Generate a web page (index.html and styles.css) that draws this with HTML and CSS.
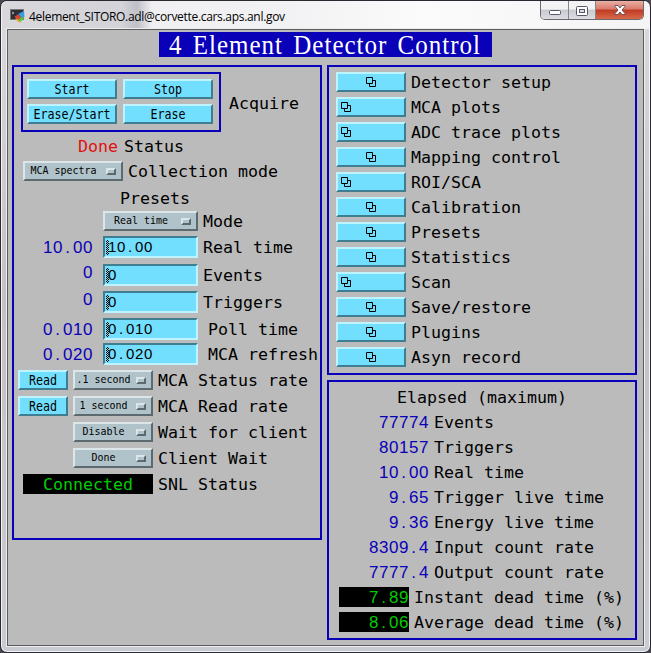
FILE: index.html
```
<!DOCTYPE html>
<html lang="en">
<head>
<meta charset="utf-8">
<title>4element_SITORO.adl</title>
<link rel="stylesheet" href="styles.css">
</head>
<body>
<div class="window">
  <header class="titlebar">
    <svg class="app-icon" width="16" height="16" viewBox="0 0 16 16">
      <rect x="0" y="1" width="14" height="11" fill="#77797c"/><rect x="1" y="2" width="12" height="9" fill="#2c3034"/><path d="M2 4l2 1-2 1" stroke="#ccc" fill="none" stroke-width=".8"/>
      <path d="M8 6l6-3 .5 6-3 1z" fill="#3d9be0"/><path d="M4.500 8.500l3.500-2 3.500 3.500-3.500 2z" fill="#e2442f"/><path d="M8 12l3.500-3 3 1-4 4z" fill="#5cc63c"/><path d="M5 9.500l3 2 2.500 3.500-3-1.500z" fill="#f0a030"/>
    </svg>
    <span class="caption">4element_SITORO.adl@corvette.cars.aps.anl.gov</span>
    <div class="controls">
      <div class="ctl min"><svg width="12" height="5"><rect x=".5" y=".5" width="11" height="4" rx="1" fill="#fff" stroke="#55586c"/></svg></div>
      <div class="ctl max"><svg width="12" height="10"><rect x=".5" y=".5" width="11" height="9" rx="1" fill="#fff" stroke="#55586c"/><rect x="3.5" y="3.5" width="5" height="3" fill="#ddd" stroke="#55586c"/></svg></div>
      <div class="ctl close"><svg width="12" height="10" viewBox="0 0 12 10"><path d="M1 .5h3l2 2.400 2-2.400h3v1L8 5l3 3.500v1H8L6 7.100 4 9.500H1v-1L4 5 1 1.500z" fill="#fff" stroke="#5c4650" stroke-width=".9"/></svg></div>
    </div>
  </header>
  <main class="client">
    <h1><span>4 Element Detector Control</span></h1>
    <div class="columns">
      <section class="panel control">
        <div class="row">
          <div class="acquire">
            <button class="btn"><span>Start</span></button><button class="btn"><span>Stop</span></button>
            <button class="btn"><span>Erase/Start</span></button><button class="btn"><span>Erase</span></button>
          </div>
          <span class="acquire-label">Acquire</span>
        </div>
        <div class="row status"><span class="red">Done</span><span>Status</span></div>
        <div class="row mode"><div class="menu"><span>MCA spectra</span><i></i></div><span>Collection mode</span></div>
        <div class="row presets">Presets</div>
        <div class="row preset-mode"><div class="menu"><span>Real time</span><i></i></div><span>Mode</span></div>
        <div class="row preset"><span class="num val">10<b>.</b>00</span><div class="field num">10<b>.</b>00</div><span>Real time</span></div>
        <div class="row preset"><span class="num val up">0</span><div class="field num">0</div><span>Events</span></div>
        <div class="row preset"><span class="num val up">0</span><div class="field num">0</div><span>Triggers</span></div>
        <div class="row preset wide"><span class="num val">0<b>.</b>010</span><div class="field num">0<b>.</b>010</div><span>Poll time</span></div>
        <div class="row preset wide"><span class="num val">0<b>.</b>020</span><div class="field num">0<b>.</b>020</div><span>MCA refresh</span></div>
        <div class="row rate"><button class="btn"><span>Read</span></button><div class="menu"><span>.1 second</span><i></i></div><span>MCA Status rate</span></div>
        <div class="row rate"><button class="btn"><span>Read</span></button><div class="menu"><span>1 second</span><i></i></div><span>MCA Read rate</span></div>
        <div class="row wait"><div class="menu"><span>Disable</span><i></i></div><span>Wait for client</span></div>
        <div class="row wait"><div class="menu"><span>Done</span><i></i></div><span>Client Wait</span></div>
        <div class="row snl"><span class="led">Connected</span><span>SNL Status</span></div>
      </section>
      <div class="right">
        <svg width="0" height="0" class="defs"><symbol id="rel" viewBox="0 0 10 10"><path d="M3.500 3.500h6v6h-6z" fill="none" stroke="#000"/><path d="M.5.5h6v6h-6z" fill="#73dfff" stroke="#000"/></symbol></svg>
        <section class="panel links">
          <div class="row"><button class="btn"><svg><use href="#rel"/></svg></button><span>Detector setup</span></div>
          <div class="row"><button class="btn left"><svg><use href="#rel"/></svg></button><span>MCA plots</span></div>
          <div class="row"><button class="btn left"><svg><use href="#rel"/></svg></button><span>ADC trace plots</span></div>
          <div class="row"><button class="btn"><svg><use href="#rel"/></svg></button><span>Mapping control</span></div>
          <div class="row"><button class="btn left"><svg><use href="#rel"/></svg></button><span>ROI/SCA</span></div>
          <div class="row"><button class="btn"><svg><use href="#rel"/></svg></button><span>Calibration</span></div>
          <div class="row"><button class="btn"><svg><use href="#rel"/></svg></button><span>Presets</span></div>
          <div class="row"><button class="btn"><svg><use href="#rel"/></svg></button><span>Statistics</span></div>
          <div class="row"><button class="btn left"><svg><use href="#rel"/></svg></button><span>Scan</span></div>
          <div class="row"><button class="btn"><svg><use href="#rel"/></svg></button><span>Save/restore</span></div>
          <div class="row"><button class="btn"><svg><use href="#rel"/></svg></button><span>Plugins</span></div>
          <div class="row"><button class="btn"><svg><use href="#rel"/></svg></button><span>Asyn record</span></div>
        </section>
        <section class="panel elapsed">
          <div class="row heading">Elapsed (maximum)</div>
          <div class="row"><span class="num val">77774</span><span>Events</span></div>
          <div class="row"><span class="num val">80157</span><span>Triggers</span></div>
          <div class="row"><span class="num val">10<b>.</b>00</span><span>Real time</span></div>
          <div class="row"><span class="num val">9<b>.</b>65</span><span>Trigger live time</span></div>
          <div class="row"><span class="num val">9<b>.</b>36</span><span>Energy live time</span></div>
          <div class="row"><span class="num val">8309<b>.</b>4</span><span>Input count rate</span></div>
          <div class="row"><span class="num val">7777<b>.</b>4</span><span>Output count rate</span></div>
          <div class="row"><span class="num led">7<b>.</b>89</span><span>Instant dead time (%)</span></div>
          <div class="row"><span class="num led">8<b>.</b>06</span><span>Average dead time (%)</span></div>
        </section>
      </div>
    </div>
  </main>
</div>
</body>
</html>
```
FILE: styles.css
```
* { box-sizing: border-box; }
body { margin: 0; background: #4a4650; overflow: hidden; }
.window {
  width: 651px; height: 653px; padding: 0 6px 6px;
  border: 1px solid #2a2830; border-radius: 7px;
  box-shadow: inset 0 0 0 1px #f4f4f6;
  background: linear-gradient(180deg, #eee 0, #d8d8da 30px, #c4c0c6 300px, #c8ccd2 100%);
}
.titlebar {
  height: 28px; margin: 0 -5px; padding: 1px 5px 0 8px;
  display: flex; align-items: flex-start;
  border-radius: 6px 6px 0 0;
  background: linear-gradient(90deg, #d9d9dc 0, #d3d3d8 120px, #bfc0c8 135px, #f0f0f2 150px, #f2f2f4 290px, #fbfbfb 420px, #f4f4f4 100%);
}
.app-icon { margin: 6px 4px 0 0; }
.caption { flex: 1; margin: 6px 0 0 -1px; font: 12px/18px "Open Sans", "Noto Sans", sans-serif; color: #000; white-space: nowrap; letter-spacing: -.310px; }
.controls { display: flex; height: 19px; margin-top: -1px; border: 1px solid #6a6a70; border-top: 0; border-radius: 0 0 5px 5px; overflow: hidden; }
.ctl { display: flex; align-items: center; justify-content: center; background: linear-gradient(#f3f3f4 0 45%, #c9cacf 50%, #dcdce2); border-right: 1px solid #85858c; }
.min { width: 28px; padding-top: 5px; }
.max { width: 27px; padding-top: 1px; }
.close { width: 47px; border: 0; background: linear-gradient(#eab0a4 0, #d9796a 45%, #c03a22 50%, #d8694a); }

.client {
  width: 637px; height: 617px; border: 1px solid #5c5c5c; background: #bbb;
  box-shadow: 0 0 0 1px #eee;
  font: 16.610px/20px "DejaVu Sans Mono", monospace; color: #000;
  padding-top: 2px;
}
h1 { margin: 0 0 0 151px; width: 333px; height: 25px; background: #0a00b8; color: #fff; font: 25px/25px "Liberation Serif", serif; letter-spacing: 1px; word-spacing: 3px; padding-left: 10px; white-space: pre; }
h1 span { display: inline-block; transform: scaleY(1.060); }
.columns { display: flex; gap: 5px; margin: 8px 0 0 4px; align-items: flex-start; }
.panel { width: 310px; border: 2px solid #0a00b8; padding-top: 5px; display: grid; }
.row { display: flex; height: 20px; line-height: 22px; white-space: pre; }
.control { height: 475px; align-content: start; grid-template-rows: 64px 25px 27px 23px 25px 28px 27px 27px 25px 27px 26px 26px 26px 26px 20px; }
.right { display: grid; gap: 5px; }
.defs { position: absolute; }

.btn, .menu, .field { border: 2px solid; height: 20px; padding: 0; display: flex; align-items: center; }
.btn { justify-content: center; color: #000; background: #73dfff; border-color: #bff3ff #3f7e90 #3f7e90 #bff3ff; font: 11.630px/16px "DejaVu Sans Mono", monospace; }
.btn span { transform: scaleY(1.150); }
.btn svg { width: 10px; height: 10px; display: block; }
.btn.left { justify-content: flex-start; padding-left: 3px; }
.menu { background: #b0c3ca; border-color: #dce6e9 #5c6a70 #5c6a70 #dce6e9; font: 9.970px/16px "DejaVu Sans Mono", monospace; padding-right: 5px; }
.menu span { flex: 1; margin-right: 4px; text-align: center; transform: scaleY(1.100); }
.menu i { width: 10px; height: 7px; border: 2px solid; border-color: #dce6e9 #5c6a70 #5c6a70 #dce6e9; }
.field { width: 95px; height: 22px; margin-left: 10px; padding-left: 1px; background: #73dfff; border-color: #3f7e90 #bff3ff #bff3ff #3f7e90; }
.field::before { content: ""; width: 3px; height: 15px; margin-right: -1px; flex: none; background: conic-gradient(#000 25%, transparent 0 50%, #000 0 75%, transparent 0) 0 0 / 2px 2px; }
b { font-weight: normal; }
.num { font-family: "Liberation Sans", sans-serif; font-size: 17px; letter-spacing: .550px; }
.num b { padding: 0 2.360px; }
.field.num { font-size: 15px; letter-spacing: .660px; }
.field.num b { padding: 0 2.080px; }
.val { color: #0a00b8; text-align: right; }
.led { background: #000; color: #00cd00; height: 20px; line-height: 21px; }

.acquire { width: 200px; height: 60px; margin-left: 7px; border: 2px solid #0a00b8; padding: 5px 4px; display: grid; grid-template-columns: 90px 90px; gap: 5px 6px; align-content: start; }
.acquire-label { margin: 21px 0 0 8px; }
.status { padding-left: 64px; gap: 6px; }
.red { color: #e01010; }
.mode { padding-left: 9px; gap: 5px; }
.mode .menu { width: 100px; }
.presets { padding-left: 106px; }
.preset-mode { padding-left: 89px; gap: 5px; }
.preset-mode .menu { width: 95px; }
.preset { height: 22px; line-height: 24px; }
.preset .val { width: 79px; }
.preset .up { margin-top: -3px; }
.preset > span:last-child { margin-left: 5px; }
.wide > span:last-child { margin-left: 10px; }
.rate { padding-left: 4px; gap: 5px; }
.rate .btn { width: 50px; }
.rate .menu, .wait .menu { width: 80px; }
.wait { padding-left: 59px; gap: 5px; }
.snl { padding-left: 9px; gap: 5px; }
.snl .led { width: 130px; text-align: center; }

.links { height: 310px; padding-left: 7px; grid-auto-rows: 25px; }
.links .row { gap: 5px; }
.links .btn { width: 70px; }
.elapsed { height: 260px; grid-auto-rows: 25px; }
.elapsed .row { gap: 5px; }
.elapsed .heading { padding-left: 68px; }
.elapsed .val { width: 100px; }
.elapsed .led { width: 70px; margin-left: 10px; text-align: right; }
```
